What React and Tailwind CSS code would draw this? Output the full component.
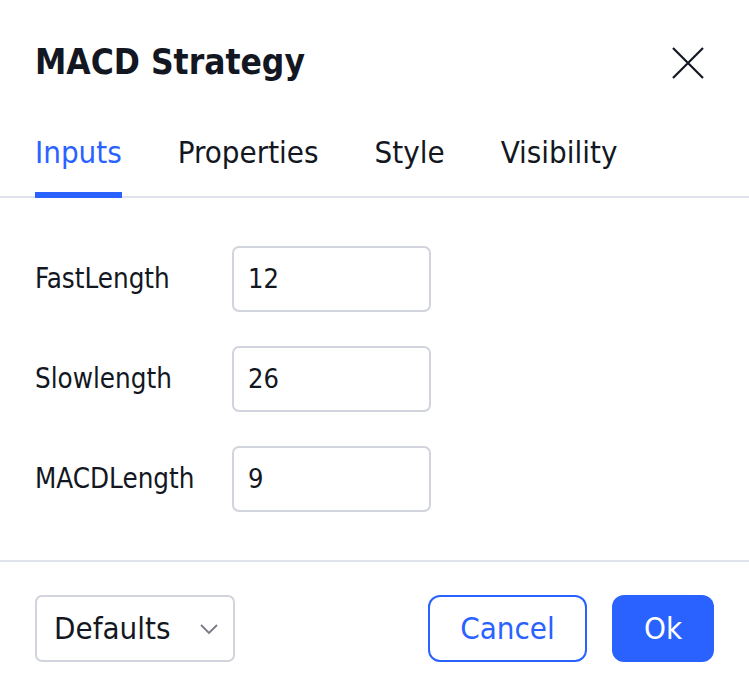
import React from 'react';

const tabs = ['Inputs', 'Properties', 'Style', 'Visibility'];

const inputs = [
  { label: 'FastLength', value: '12' },
  { label: 'Slowlength', value: '26' },
  { label: 'MACDLength', value: '9' },
];

function App() {
  return (
    <div className="w-[749px] h-[690px] bg-white text-[#131722] font-['DejaVu_Sans_Condensed','DejaVu_Sans',sans-serif] font-stretch-condensed flex flex-col">
      {/* header */}
      <div className="flex items-center justify-between pl-[35px] pr-[44px] h-[126px] pb-[1px]">
        <h1 className="text-[35px] font-bold leading-none">MACD Strategy</h1>
        <svg width="34" height="34" viewBox="0 0 34 34" fill="none" stroke="#131722" strokeWidth="2.2">
          <path d="M2 2L32 32M32 2L2 32" />
        </svg>
      </div>

      {/* tabs */}
      <div className="border-b-2 border-[#e0e3eb] px-[35px] pt-[11px] flex gap-[56px]">
        {tabs.map((t, i) => (
          <div key={t} className="relative pb-[26px]">
            <span className={`text-[31px] leading-none ${i === 0 ? 'text-[#2962ff]' : 'text-[#131722]'}`}>{t}</span>
            {i === 0 ? <div className="absolute left-0 right-0 -bottom-[2px] h-[6px] bg-[#2962ff]" /> : null}
          </div>
        ))}
      </div>

      {/* inputs */}
      <div className="flex flex-col gap-[34px] pt-[48px] pb-[48px] px-[35px] border-b-2 border-[#e0e3eb]">
        {inputs.map((row) => (
          <div key={row.label} className="flex items-center h-[66px]">
            <span className="w-[197px] text-[27.5px]">{row.label}</span>
            <div className="w-[199px] h-[66px] rounded-[7px] border-2 border-[#d1d4dc] flex items-center px-[14px] text-[27px]">
              {row.value}
            </div>
          </div>
        ))}
      </div>

      {/* footer */}
      <div className="flex items-center justify-between px-[35px] pt-[33px]">
        <div className="w-[200px] h-[67px] rounded-[7px] border-2 border-[#d1d4dc] flex items-center justify-between pl-[17px] pr-[14px]">
          <span className="text-[31px]">Defaults</span>
          <svg width="20" height="12" viewBox="0 0 20 12" fill="none" stroke="#787b86" strokeWidth="1.8">
            <path d="M2 2L10 10L18 2" />
          </svg>
        </div>
        <div className="flex gap-[25px]">
          <button className="w-[159px] h-[67px] rounded-[12px] border-2 border-[#2962ff] text-[#2962ff] text-[31px]">Cancel</button>
          <button className="w-[102px] h-[67px] rounded-[12px] bg-[#2962ff] text-white text-[31px]">Ok</button>
        </div>
      </div>
    </div>
  );
}

export default App;
